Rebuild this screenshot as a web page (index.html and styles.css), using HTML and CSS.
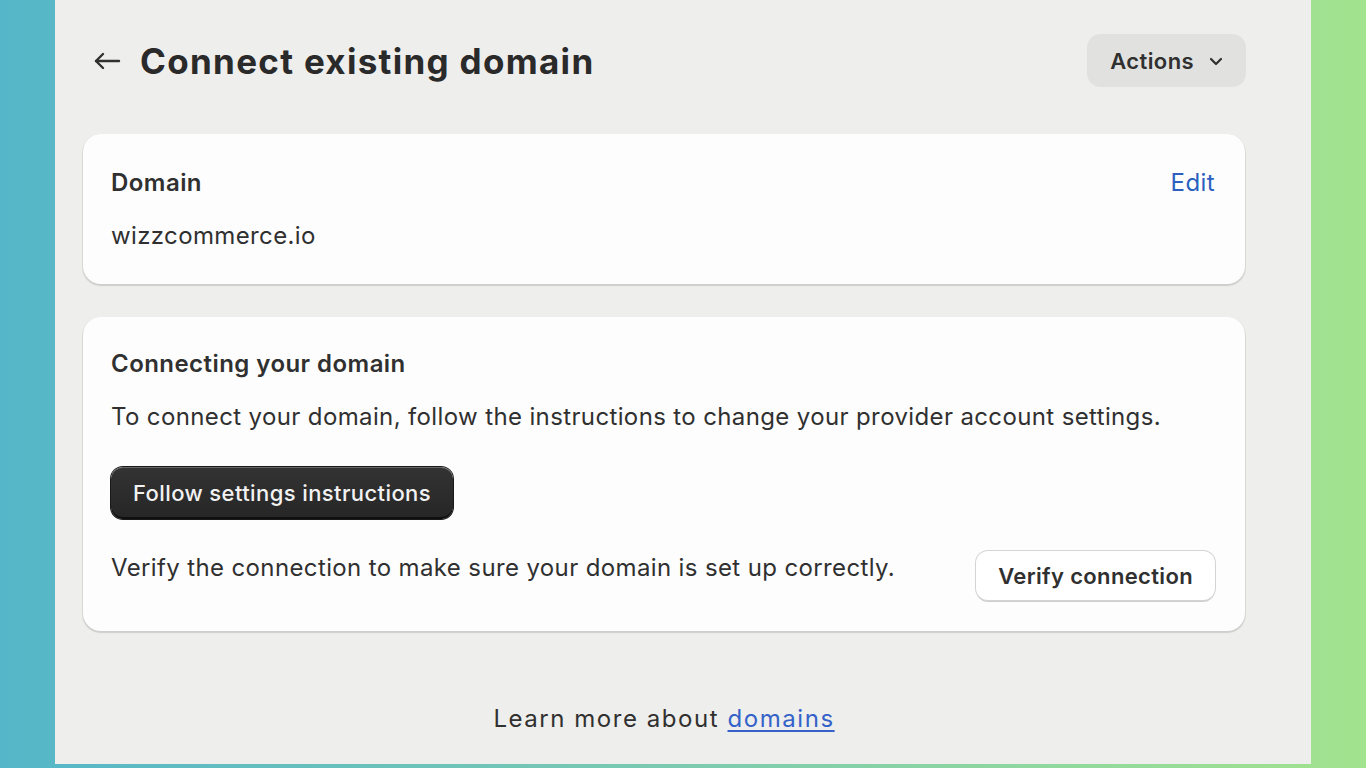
FILE: index.html
```html
<!DOCTYPE html>
<html lang="en">
<head>
<meta charset="utf-8">
<title>Connect existing domain</title>
<link rel="stylesheet" href="styles.css">
</head>
<body>
<main class="panel">
  <header class="header">
    <div class="title-group">
      <button class="back" aria-label="Back">
        <svg width="28" height="28" viewBox="0 0 28 28" fill="none" stroke="#303030" stroke-width="2.4" stroke-linecap="round" stroke-linejoin="round"><path d="M26 14H3"/><path d="M10 7l-7 7 7 7"/></svg>
      </button>
      <h1 class="title">Connect existing domain</h1>
    </div>
    <button class="actions">Actions
      <svg width="20" height="20" viewBox="0 0 20 20" fill="none" stroke="#303030" stroke-width="2.2" stroke-linecap="round" stroke-linejoin="round"><path d="M5 8l5 5 5-5"/></svg>
    </button>
  </header>

  <section class="card card-1">
    <div class="row-between">
      <h2 class="card-title">Domain</h2>
      <a class="edit" href="#">Edit</a>
    </div>
    <p class="text gap-sm">wizzcommerce.io</p>
  </section>

  <section class="card card-2">
    <h2 class="card-title">Connecting your domain</h2>
    <p class="text gap-sm">To connect your domain, follow the instructions to change your provider account settings.</p>
    <button class="btn-dark">Follow settings instructions</button>
    <div class="verify-row">
      <p class="text verify-text">Verify the connection to make sure your domain is set up correctly.</p>
      <button class="btn-light">Verify connection</button>
    </div>
  </section>

  <p class="footer">Learn more about <a href="#">domains</a></p>
</main>
</body>
</html>
```

FILE: styles.css
```css
* { box-sizing: border-box; }
html, body { margin: 0; padding: 0; }
body {
  width: 1366px;
  height: 768px;
  overflow: hidden;
  background: linear-gradient(to right, #54b6c8 0%, #7ccbb0 50%, #a2e38e 100%);
  font-family: Inter, "Noto Sans", sans-serif;
  color: #303030;
}
.panel {
  margin-left: 55px;
  width: 1256px;
  height: 764px;
  background: #eeeeec;
  padding: 34px 66px 0 28px;
  display: flex;
  flex-direction: column;
}
.header {
  height: 53px;
  display: flex;
  align-items: center;
  justify-content: space-between;
}
.title-group {
  display: flex;
  align-items: center;
  gap: 18px;
}
.back {
  border: 0;
  background: none;
  padding: 0;
  margin-left: 9px;
  display: flex;
  width: 30px;
  height: 30px;
  align-items: center;
  justify-content: center;
}
.title {
  margin: 0;
  font-size: 35px;
  font-weight: 700;
  letter-spacing: 1.3px;
  color: #2a2a2a;
}
.actions {
  height: 53px;
  margin-right: -1px;
  padding: 0 20px 0 23px;
  border: 0;
  border-radius: 14px;
  background: #e1e2e0;
  font-family: inherit;
  font-size: 22px;
  font-weight: 600;
  letter-spacing: 0.4px;
  color: #303030;
  display: flex;
  align-items: center;
  gap: 12px;
}
.card {
  background: #fdfdfd;
  border-radius: 18px;
  padding: 32px 30px 31px 28px;
  box-shadow: 0 1px 0 1px rgba(0,0,0,0.08), 0 2px 2px rgba(0,0,0,0.06);
}
.card-1 { margin-top: 47px; padding-top: 34px; padding-bottom: 33px; }
.card-2 { margin-top: 33px; }
.row-between {
  display: flex;
  justify-content: space-between;
  align-items: center;
}
.card-title {
  margin: 0;
  font-size: 24px;
  line-height: 30px;
  font-weight: 600;
  letter-spacing: 0.45px;
  color: #303030;
}
.edit {
  font-size: 24px;
  line-height: 30px;
  letter-spacing: 0.4px;
  color: #2c5fc0;
  text-decoration: none;
}
.text {
  margin: 0;
  font-size: 24px;
  line-height: 30px;
  letter-spacing: 0.37px;
  color: #303030;
}
.gap-sm { margin-top: 23px; }
.btn-dark {
  margin-top: 35px;
  align-self: flex-start;
  display: block;
  height: 52px;
  padding: 0 22px;
  border: 0;
  border-radius: 12px;
  background: linear-gradient(#333 0%, #262626 100%);
  box-shadow: inset 0 1px 0 rgba(255,255,255,0.25), inset 0 -2px 0 rgba(0,0,0,0.6), 0 0 0 1px #1a1a1a;
  color: #f2f2f2;
  font-family: inherit;
  font-size: 22px;
  font-weight: 500;
  letter-spacing: 0.4px;
}
.verify-row {
  margin-top: 32px;
  display: flex;
  justify-content: space-between;
  align-items: flex-start;
}
.verify-text { margin-top: 2px; }
.btn-light {
  height: 49px;
  padding: 0 22px;
  border: 0;
  border-radius: 12px;
  background: #ffffff;
  box-shadow: 0 0 0 1px #d4d4d4, 0 2px 0 #cfcfcf;
  color: #303030;
  font-family: inherit;
  font-size: 22px;
  font-weight: 600;
  letter-spacing: 0.35px;
}
.footer {
  margin: 73px 0 0;
  text-align: center;
  font-size: 24px;
  line-height: 30px;
  letter-spacing: 1.55px;
  color: #303030;
}
.footer a {
  color: #3562c9;
  text-decoration: underline;
  text-underline-offset: 3px;
}
```
